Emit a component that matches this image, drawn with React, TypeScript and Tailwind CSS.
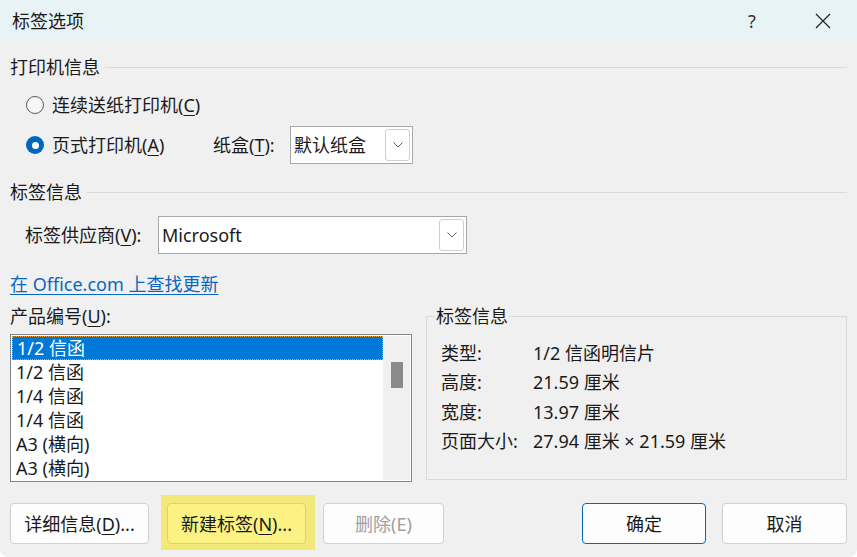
import React from "react";

const font = {
  fontFamily: '"Noto Sans", "Noto Sans CJK SC", sans-serif',
};

function Key({ k }: { k: string }) {
  return <span className="underline underline-offset-[3px] decoration-1">{k}</span>;
}

function Radio({ checked }: { checked?: boolean }) {
  return checked ? (
    <span className="w-[18px] h-[18px] rounded-full bg-[#0067c0] flex items-center justify-center shrink-0">
      <span className="w-[7px] h-[7px] rounded-full bg-white" />
    </span>
  ) : (
    <span className="w-[18px] h-[18px] rounded-full border border-[#5a5a5a] bg-[#f7f7f7] shrink-0" />
  );
}

function Chevron() {
  return (
    <svg width="10" height="6" viewBox="0 0 10 6">
      <path d="M0.5 0.5 L5 5 L9.5 0.5" fill="none" stroke="#606060" strokeWidth="1" />
    </svg>
  );
}

function Select({ value, width }: { value: string; width: string }) {
  return (
    <div className={`${width} h-[38px] bg-white border border-[#a8a8a8] flex items-stretch`}>
      <span className="flex-1 flex items-center pl-[3px]">{value}</span>
      <span className="w-[25px] my-[2px] mr-[2px] border border-[#cfcfcf] rounded-[3px] bg-white flex items-center justify-center">
        <Chevron />
      </span>
    </div>
  );
}

function Section({ title }: { title: string }) {
  return (
    <div className="flex items-center h-[24px]">
      <span>{title}</span>
      <span className="flex-1 h-px bg-[#dadada] ml-[5px]" />
    </div>
  );
}

const products = ["1/2 信函", "1/2 信函", "1/4 信函", "1/4 信函", "A3 (横向)", "A3 (横向)"];

const info: [string, string][] = [
  ["类型:", "1/2 信函明信片"],
  ["高度:", "21.59 厘米"],
  ["宽度:", "13.97 厘米"],
  ["页面大小:", "27.94 厘米 × 21.59 厘米"],
];

function Button({
  children,
  primary,
  disabled,
  width,
  yellow,
}: {
  children: React.ReactNode;
  primary?: boolean;
  disabled?: boolean;
  width: string;
  yellow?: boolean;
}) {
  return (
    <button
      className={`${width} h-[41px] rounded-[4px] border flex items-center justify-center ${
        primary ? "border-[#0067c0]" : yellow ? "border-[#dcd36a]" : "border-[#d0d0d0]"
      } ${yellow ? "bg-[#fbf283]" : "bg-[#fdfdfd]"} ${disabled ? "text-[#a0a0a0]" : "text-[#1a1a1a]"}`}
    >
      {children}
    </button>
  );
}

export default function App() {
  return (
    <div
      className="w-[857px] h-[557px] bg-[#f0f0f0] text-[18px] leading-[24px] text-[#1a1a1a] overflow-hidden rounded-b-[8px]"
      style={font}
    >
      <div className="h-[42px] bg-[#e8f3f5] flex items-center pl-[12px]">
        <span className="flex-1">标签选项</span>
        <span className="w-[20px] text-center mr-[53px] text-[#333]">?</span>
        <svg width="16" height="16" viewBox="0 0 16 16" className="mr-[26px]">
          <path d="M1 1 L15 15 M15 1 L1 15" stroke="#222" strokeWidth="1.2" />
        </svg>
      </div>

      <div className="px-[10px]">
        <div className="mt-[13px]">
          <Section title="打印机信息" />
        </div>
        <div className="mt-[7px] h-[38px] flex items-center pl-[16px] gap-[8px]">
          <Radio />
          <span>
            连续送纸打印机(<Key k="C" />)
          </span>
        </div>
        <div className="mt-[2px] h-[38px] flex items-center pl-[16px]">
          <Radio checked />
          <span className="ml-[8px] w-[161px]">
            页式打印机(<Key k="A" />)
          </span>
          <span className="w-[77px]">
            纸盒(<Key k="T" />):
          </span>
          <Select value="默认纸盒" width="w-[123px]" />
        </div>

        <div className="mt-[16px]">
          <Section title="标签信息" />
        </div>
        <div className="mt-[12px] h-[38px] flex items-center pl-[15px]">
          <span className="w-[133px]">
            标签供应商(<Key k="V" />):
          </span>
          <Select value="Microsoft" width="w-[309px]" />
        </div>

        <div className="mt-[18px] h-[24px]">
          <span className="text-[#0a66c2] underline underline-offset-[3px] decoration-1">
            在 Office.com 上查找更新
          </span>
        </div>

        <div className="flex mt-[8px]">
          <div className="w-[402px]">
            <div className="h-[24px]">
              产品编号(<Key k="U" />):
            </div>
            <div className="mt-[6px] h-[148px] bg-white border border-[#828790] flex p-[1px]">
              <div className="flex-1 flex flex-col">
                {products.map((p, i) => (
                  <div
                    key={i}
                    className={`h-[24px] pl-[4px] flex items-center ${
                      i === 0
                        ? "bg-[#0078d7] text-white border border-dotted border-[#e8a33c] pl-[3px]"
                        : ""
                    }`}
                  >
                    {p}
                  </div>
                ))}
              </div>
              <div className="w-[27px] bg-[#f0f0f0] flex justify-center pt-[26px]">
                <span className="w-[12px] h-[26px] bg-[#8a8a8a]" />
              </div>
            </div>
          </div>

          <div className="ml-[14px] flex-1 mt-[12px] h-[164px] border border-[#dadada] relative px-[14px] pt-[21px]">
            <span className="absolute -top-[13px] left-[8px] bg-[#f0f0f0] px-[1px]">标签信息</span>
            {info.map(([k, v]) => (
              <div key={k} className="h-[29.5px] flex items-center">
                <span className="w-[92px]">{k}</span>
                <span>{v}</span>
              </div>
            ))}
          </div>
        </div>

        <div className="mt-[13px] flex items-start">
          <div className="mt-[8px]">
            <Button width="w-[139px]">
              详细信息(<Key k="D" />)...
            </Button>
          </div>
          <div className="ml-[12px] bg-[#f3e97b] pl-[6px] pr-[9px] pt-[8px] pb-[6px]">
            <Button width="w-[139px]" yellow>
              新建标签(<Key k="N" />)...
            </Button>
          </div>
          <div className="ml-[8px] mt-[8px]">
            <Button width="w-[121px]" disabled>
              删除(E)
            </Button>
          </div>
          <div className="ml-auto mt-[8px]">
            <Button width="w-[124px]" primary>
              确定
            </Button>
          </div>
          <div className="ml-[16px] mt-[8px]">
            <Button width="w-[125px]">取消</Button>
          </div>
        </div>
      </div>
    </div>
  );
}
